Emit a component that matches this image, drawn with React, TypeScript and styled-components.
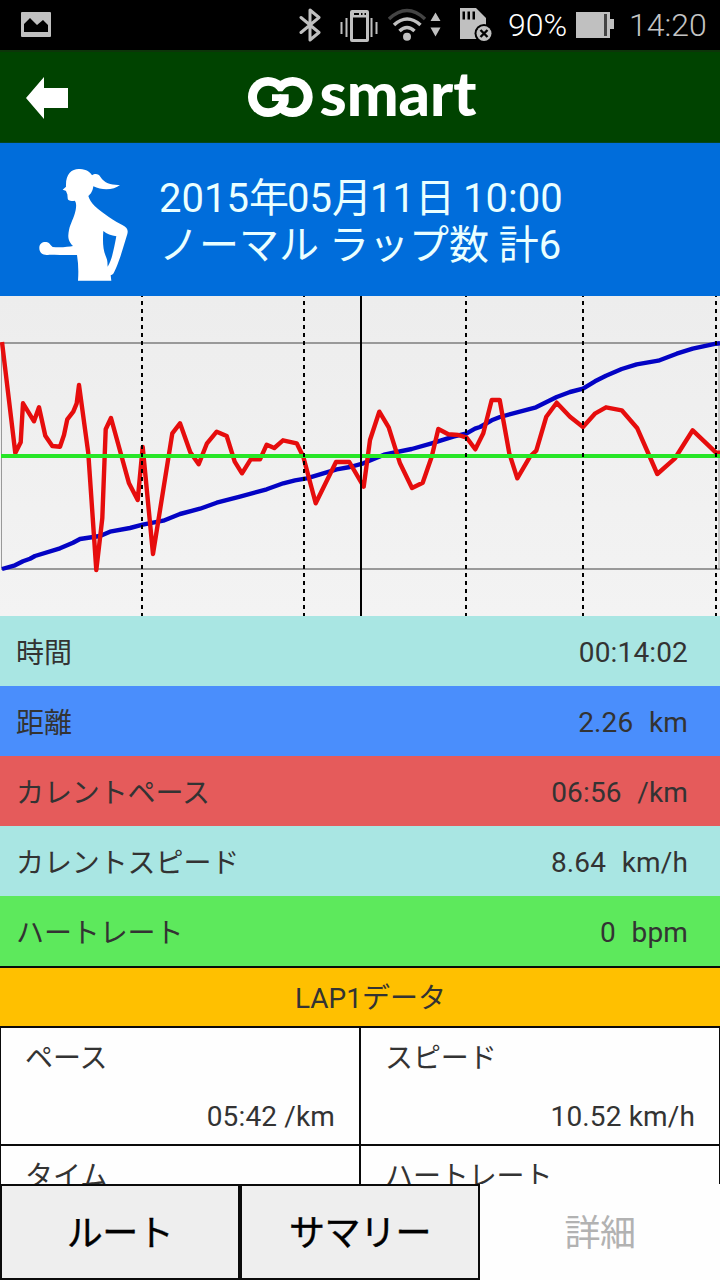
import React from 'react';
import styled, { createGlobalStyle } from 'styled-components';

const GlobalStyle = createGlobalStyle`
  * { box-sizing: border-box; }
  body {
    margin: 0;
    background: #fff;
    font-family: Roboto, "Noto Sans CJK JP", sans-serif;
  }
`;

const Screen = styled.div`
  display: flex;
  flex-direction: column;
  width: 720px;
  height: 1280px;
  overflow: hidden;
  background: #fefefe;
`;

const StatusBar = styled.header`
  display: flex;
  align-items: center;
  flex: none;
  height: 50px;
  padding: 0 11px 0 20px;
  background: #000;
`;

const StatusIcon = styled.svg<{ $gap?: number }>`
  display: block;
  flex: none;
  margin-left: ${(p) => p.$gap ?? 0}px;
`;

const Spacer = styled.div`
  flex: 1;
`;

const StatusText = styled.span<{ $color: string; $gap: number; $width: number }>`
  width: ${(p) => p.$width}px;
  margin-left: ${(p) => p.$gap}px;
  color: ${(p) => p.$color};
  font-size: 32px;
  font-weight: 300;
  line-height: 50px;
  white-space: nowrap;
`;

const AppBar = styled.div`
  display: flex;
  align-items: center;
  flex: none;
  height: 93px;
  padding-left: 26px;
  border-top: 2px solid #0c3509;
  border-bottom: 1px solid #06451f;
  background: #004300;
`;

const BackButton = styled.button`
  display: block;
  width: 42px;
  height: 42px;
  margin-top: 1px;
  padding: 0;
  border: 0;
  background: none;
`;

const Logo = styled.svg`
  display: block;
  margin: 2px 0 0 176px;
`;

const Session = styled.section`
  display: flex;
  flex: none;
  height: 153px;
  padding-left: 34px;
  background: #006ddb;
`;

const Runner = styled.svg`
  display: block;
  margin-top: 17px;
`;

const SessionText = styled.div`
  margin: 32px 0 0 25px;
  color: #eaffff;
  font-size: 40px;
  line-height: 47px;
  white-space: pre;
`;

const Cjk = styled.span<{ $tracking: number }>`
  letter-spacing: ${(p) => p.$tracking}px;
`;

const Chart = styled.svg`
  display: block;
  flex: none;
`;

const MetricRow = styled.div<{ $color: string }>`
  display: flex;
  align-items: center;
  justify-content: space-between;
  flex: none;
  height: 70px;
  padding: 0 32px 0 16px;
  background: ${(p) => p.$color};
  color: #333;
  font-size: 28px;
`;

const MetricLabel = styled.span`
  letter-spacing: -0.1px;
`;

const MetricValue = styled.span`
  padding-top: 3px;
  letter-spacing: 0.15px;
  word-spacing: 0.7px;
  white-space: pre;
`;

const LapTitle = styled.div`
  flex: none;
  height: 62px;
  padding: 3px 0 0 21px;
  border: solid #0a0a0a;
  border-width: 2px 0;
  background: #ffc000;
  color: #333;
  font-size: 28px;
  line-height: 56px;
  text-align: center;
`;

const LapGrid = styled.div`
  display: grid;
  grid-template-columns: 1fr 1fr;
  grid-auto-rows: 118px;
  flex: none;
  height: 156px;
  overflow: hidden;
`;

const LapCell = styled.div`
  display: flex;
  flex-direction: column;
  justify-content: space-between;
  padding: 10px 24px 6px;
  border: solid #0a0a0a;
  border-width: 0 1px 2px;
  color: #333;
  font-size: 28px;
  line-height: 42px;
`;

const LapValue = styled.span`
  align-self: flex-end;
  letter-spacing: 0.15px;
`;

const Tabs = styled.nav`
  display: grid;
  grid-template-columns: repeat(3, 240px);
  flex: none;
  height: 96px;
`;

const Tab = styled.button<{ $current?: boolean }>`
  padding: 0 0 4px;
  border: ${(p) => (p.$current ? '0' : '2px solid #0a0a0a')};
  background: ${(p) => (p.$current ? '#fefefe' : '#eee')};
  color: ${(p) => (p.$current ? '#b2b2b2' : '#000')};
  font: 400 36px Roboto, "Noto Sans CJK JP", sans-serif;
  -webkit-text-stroke: ${(p) => (p.$current ? 0 : 0.4)}px currentColor;
  letter-spacing: -0.5px;
`;

const speed = `2,342 15.3,453 20.7,442.3 23,403.3 34,421.3 39,407.3 45.3,435.7 52.3,446 60,446.7 64,435 67.3,419.3
73.3,411.7 76.7,403.3 79,385 88.3,453.3 96.3,570 102.3,518.3 105.7,429.3 111,418 129,483.3 137.7,500 142.7,447
153,554 172.3,433.3 180,423.3 190.3,452.3 198.7,464.3 207,443.3 216.7,431.7 226.7,436 234.7,461.7 242,473.3
250.7,459.3 260,459.3 266.7,444.7 274.3,448 283,440.3 296.7,443.3 303.3,456.7 315.7,503.3 336,462 349.3,462
363.7,486.7 370,440 379.3,411.7 388.7,427.3 400,463.3 412,488 422.7,482.7 431.7,456.7 438.3,429 448.3,434.3
458.3,435 466.7,437.7 475.3,449.3 483.3,433.3 491.7,400 499.7,400 509.3,453.3 517.3,478.3 530,456.7 536.3,450.7
546.3,416.7 556.7,402.7 570,416.7 583,427 595.3,413.3 606,407.3 621.7,410.3 637.3,428.3 649,455 657.3,474
675,458.3 692.7,430.3 716,452.7 720,452.7`;

const distance = `2,569 15,565.3 23,561.3 30,558.7 35,556 60,548.3 73,542.7 80,539 100,536 110,531.7 130,528 142.7,524.7
163.3,520.7 180,514 200,508.7 216.7,502.7 240,496.7 266.7,489.3 283.3,483.3 295,480.3 306.7,478.3 336.7,469.3
350,467 363.3,463.3 384,454.7 411.7,449 431.7,443.3 453.3,436.7 466.7,433.3 475,428.7 480,427 491.7,420.3
500,417 536,407.3 556.7,397 570,392 583,388.7 595,381.3 606,375.7 621.7,369 636.7,364.3 658.3,360.7
676.7,353.7 692.7,348.7 716,343.7 720,343.3`;

const lapMarks = [142, 304, 466, 583, 716];

const metrics = [
  { label: '時間', value: '00:14:02', color: '#a9e6e3' },
  { label: '距離', value: '2.26  km', color: '#4a8efc' },
  { label: 'カレントペース', value: '06:56  /km', color: '#e55b5b' },
  { label: 'カレントスピード', value: '8.64  km/h', color: '#a9e6e3' },
  { label: 'ハートレート', value: '0  bpm', color: '#5de95c' },
];

const lapData = [
  { label: 'ペース', value: '05:42 /km' },
  { label: 'スピード', value: '10.52 km/h' },
  { label: 'タイム', value: '' },
  { label: 'ハートレート', value: '' },
];

export default function App() {
  return (
    <>
      <GlobalStyle />
      <Screen>
        <StatusBar>
          <StatusIcon width="32" height="26" viewBox="0 0 32 26">
            <path fillRule="evenodd" fill="#c0c0c0" d="M2 0h28q1 0 1 1v23q0 1-1 1H2q-1 0-1-1V1q0-1 1-1ZM4 20h24v-7l-5-5-6 5-7-7-6 6Z" />
          </StatusIcon>
          <Spacer />
          <StatusIcon width="22" height="36" viewBox="0 0 22 36" fill="none" stroke="#c0c0c0" strokeWidth="3">
            <path d="M2 10.500 20 25.500 11 33V3L20 10.500 2 25.500" strokeLinejoin="round" strokeLinecap="round" />
          </StatusIcon>
          <StatusIcon $gap={19} width="38" height="34" viewBox="0 0 38 34" fill="#c0c0c0">
            <path d="M.5 14h2v12h-2zM5.500 10h2v19h-2zM30.500 10h2v19h-2zM35.500 14h2v12h-2z" />
            <path fillRule="evenodd" d="M12 2h15q2 0 2 2v28q0 2-2 2H12q-2 0-2-2V4Q10 2 12 2ZM13 9.500V31h13V9.500ZM14 5v2h5V5Zm7 0v2h1.500V5Zm3.500 0v2H26V5Z" />
          </StatusIcon>
          <StatusIcon $gap={10} width="54" height="34" viewBox="0 0 54 34" fill="none" strokeWidth="3.500">
            <path d="M1 11Q19-6 37 11" stroke="#444" />
            <path d="M6 17q13-12 26.500 0M11.500 23q7.500-7 15 0" stroke="#c0c0c0" />
            <circle cx="19" cy="28.800" r="4" fill="#c0c0c0" />
            <path d="m47.500 4.500 5 8.500h-10ZM42.500 19.500h10l-5 9Z" fill="#c0c0c0" />
          </StatusIcon>
          <StatusIcon $gap={17} width="34" height="34" viewBox="0 0 34 34">
            <path fill="#c0c0c0" d="M1 0h16l10 10v21H1Z" />
            <path fill="#000" d="M3.500 3.500h2.500v8H3.500zM8.500 3.500h2.500v8H8.500zM13.500 3.500h2.500v8h-2.500z" />
            <circle cx="25" cy="25.500" r="9.500" fill="#000" />
            <circle cx="25" cy="25.500" r="7.500" fill="#c0c0c0" />
            <path d="m21.500 22 7 7m0-7-7 7" stroke="#000" strokeWidth="2.400" />
          </StatusIcon>
          <StatusText $color="#fff" $gap={15} $width={61}>90%</StatusText>
          <StatusIcon $gap={7} width="40" height="26" viewBox="0 0 40 26">
            <path fill="#c0c0c0" d="M0 0h34v7h4v10h-4v9H0Z" />
            <path fill="#444" d="M28 2h3v22h-3z" />
          </StatusIcon>
          <StatusText $color="#c4c4c4" $gap={13} $width={80}>14:20</StatusText>
        </StatusBar>

        <AppBar>
          <BackButton aria-label="戻る">
            <svg width="42" height="42" viewBox="0 0 42 42">
              <path d="M0 21 18 0v11h24v20H18v11Z" fill="#fff" />
            </svg>
          </BackButton>
          <Logo width="236" height="50" viewBox="244 72 236 50">
            <g fill="#fff" transform="translate(244 72) scale(.3333)">
              <circle cx="72" cy="72" r="60" />
              <circle cx="146" cy="72" r="60" />
              <g fill="#004300">
                <circle cx="73" cy="72" r="34" />
                <circle cx="145" cy="72" r="34" />
                <path d="M85 55h50v9H85Z" />
              </g>
              <path d="M84 64h50v20q0 14-16 25h-24q11-10 13-25H84Z" />
            </g>
            <text x="319.500" y="114.500" fill="#fff" fontFamily="Lato, sans-serif" fontWeight="900" fontSize="60" textLength="157" lengthAdjust="spacingAndGlyphs">smart</text>
          </Logo>
        </AppBar>

        <Session>
          <Runner width="100" height="126" viewBox="0 0 300 378">
            <path
              fill="#fff"
              fillRule="evenodd"
              d="M86 89 96 80C94 40 115 25 138 27C158 28 168 36 174 46C182 40 194 40 200 52C212 70 232 76 258 75C240 90 205 92 178 79C176 95 170 102 163 108C166 118 172 128 182 138C205 160 245 185 265 195C280 203 283 210 280 222L266 268C258 295 248 322 241 335C238 343 232 345 230 346L232 362H132C134 335 133 310 129 285C105 286 70 284 46 284C30 288 16 280 16 265C15 250 28 244 40 247C48 249 48 256 56 261C80 264 105 260 117 258C98 240 103 222 105 210C109 190 120 175 125 150C128 135 126 125 122 122C112 124 100 123 101 114L100 103C98 98 97 94 95 92ZM208 213C206 240 206 270 216 290C222 302 220 312 221 320C234 300 240 265 247 229C232 226 218 222 208 213Z"
            />
          </Runner>
          <SessionText>
            <div>
              2015<Cjk $tracking={-1.9}>年</Cjk>05<Cjk $tracking={-1.9}>月</Cjk>11<Cjk $tracking={-1.9}>日</Cjk> 10:00
            </div>
            <div>
              <Cjk $tracking={0}>ノーマル ラップ数 計</Cjk>6
            </div>
          </SessionText>
        </Session>

        <Chart width="720" height="320" viewBox="0 296 720 320">
          <defs>
            <linearGradient id="chartBackdrop" x1="0" y1="0" x2="0" y2="1">
              <stop offset="0" stopColor="#ededed" />
              <stop offset="1" stopColor="#f3f3f3" />
            </linearGradient>
          </defs>
          <rect y="296" width="720" height="320" fill="url(#chartBackdrop)" />
          <path d="M1 343H720M1 569H720" stroke="#999" strokeWidth="2" />
          <path d="M1.500 343V569M719 343V569" stroke="#999" />
          <g fill="none" strokeWidth="4.400" strokeLinejoin="round">
            <polyline points={distance} stroke="#0303c4" />
            <polyline points={speed} stroke="#e60d0d" />
          </g>
          <path d="M1 456H720" stroke="#27e627" strokeWidth="4" />
          {lapMarks.map((x) => (
            <path key={x} d={`M${x} 296V616`} stroke="#000" strokeWidth="2" strokeDasharray="4 4" strokeDashoffset="3" />
          ))}
          <path d="M361 296V616" stroke="#000" strokeWidth="2" />
        </Chart>

        {metrics.map((m) => (
          <MetricRow key={m.label} $color={m.color}>
            <MetricLabel>{m.label}</MetricLabel>
            <MetricValue>{m.value}</MetricValue>
          </MetricRow>
        ))}

        <LapTitle>LAP1データ</LapTitle>
        <LapGrid>
          {lapData.map((d) => (
            <LapCell key={d.label}>
              <MetricLabel>{d.label}</MetricLabel>
              <LapValue>{d.value}</LapValue>
            </LapCell>
          ))}
        </LapGrid>

        <Tabs>
          <Tab>ルート</Tab>
          <Tab>サマリー</Tab>
          <Tab $current>詳細</Tab>
        </Tabs>
      </Screen>
    </>
  );
}
